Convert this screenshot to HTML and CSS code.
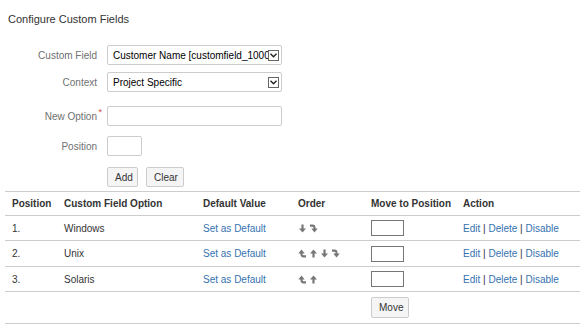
FILE: index.html
```html
<!DOCTYPE html>
<html lang="en">
<head>
    <meta charset="UTF-8">
    <title>Configure Custom Fields</title>
    <link rel="stylesheet" href="styles.css">
</head>
<body>
    <h2 class="page-title">Configure Custom Fields</h2>

    <form class="field-form">
        <div class="form-row">
            <label>Custom Field</label>
            <div class="select wide">
                <span class="select-text">Customer Name [customfield_10000]</span>
                <span class="select-arrow">
                    <svg width="7" height="5" viewBox="0 0 7 5"><path d="M0.5 0.8 L3.5 3.8 L6.5 0.8" fill="none" stroke="#222" stroke-width="1.4"/></svg>
                </span>
            </div>
        </div>
        <div class="form-row context-row">
            <label>Context</label>
            <div class="select wide">
                <span class="select-text">Project Specific</span>
                <span class="select-arrow">
                    <svg width="7" height="5" viewBox="0 0 7 5"><path d="M0.5 0.8 L3.5 3.8 L6.5 0.8" fill="none" stroke="#222" stroke-width="1.4"/></svg>
                </span>
            </div>
        </div>
        <div class="form-row option-row">
            <label class="required">New Option<span class="asterisk">*</span></label>
            <input type="text" class="text-input wide">
        </div>
        <div class="form-row position-row">
            <label>Position</label>
            <input type="text" class="text-input short">
        </div>
        <div class="form-row button-row">
            <label></label>
            <div class="buttons">
                <button type="button" class="btn btn-add">Add</button>
                <button type="button" class="btn btn-clear">Clear</button>
            </div>
        </div>
    </form>

    <table class="options-table">
        <thead>
            <tr>
                <th class="col-pos">Position</th>
                <th class="col-name">Custom Field Option</th>
                <th class="col-default">Default Value</th>
                <th class="col-order">Order</th>
                <th class="col-move">Move to Position</th>
                <th>Action</th>
            </tr>
        </thead>
        <tbody>
            <tr>
                <td>1.</td>
                <td>Windows</td>
                <td><a href="#">Set as Default</a></td>
                <td class="order-cell">
                    <svg class="arrow" width="9" height="9" viewBox="0 0 9 9"><use href="#arrow-down"/></svg>
                    <svg class="arrow" width="9" height="9" viewBox="0 0 9 9"><use href="#arrow-last"/></svg>
                </td>
                <td><input type="text" class="move-input"></td>
                <td><a href="#">Edit</a> <span class="sep">|</span> <a href="#">Delete</a> <span class="sep">|</span> <a href="#">Disable</a></td>
            </tr>
            <tr class="row-tall">
                <td>2.</td>
                <td>Unix</td>
                <td><a href="#">Set as Default</a></td>
                <td class="order-cell">
                    <svg class="arrow" width="9" height="9" viewBox="0 0 9 9"><use href="#arrow-first"/></svg>
                    <svg class="arrow" width="9" height="9" viewBox="0 0 9 9"><use href="#arrow-up"/></svg>
                    <svg class="arrow" width="9" height="9" viewBox="0 0 9 9"><use href="#arrow-down"/></svg>
                    <svg class="arrow" width="9" height="9" viewBox="0 0 9 9"><use href="#arrow-last"/></svg>
                </td>
                <td><input type="text" class="move-input"></td>
                <td><a href="#">Edit</a> <span class="sep">|</span> <a href="#">Delete</a> <span class="sep">|</span> <a href="#">Disable</a></td>
            </tr>
            <tr>
                <td>3.</td>
                <td>Solaris</td>
                <td><a href="#">Set as Default</a></td>
                <td class="order-cell">
                    <svg class="arrow" width="9" height="9" viewBox="0 0 9 9"><use href="#arrow-first"/></svg>
                    <svg class="arrow" width="9" height="9" viewBox="0 0 9 9"><use href="#arrow-up"/></svg>
                </td>
                <td><input type="text" class="move-input"></td>
                <td><a href="#">Edit</a> <span class="sep">|</span> <a href="#">Delete</a> <span class="sep">|</span> <a href="#">Disable</a></td>
            </tr>
            <tr class="move-row">
                <td></td>
                <td></td>
                <td></td>
                <td></td>
                <td><button type="button" class="btn btn-move">Move</button></td>
                <td></td>
            </tr>
        </tbody>
    </table>

    <!-- shared arrow shapes -->
    <svg class="defs" width="0" height="0">
        <defs>
            <g id="arrow-down" fill="#777">
                <rect x="3.4" y="0.5" width="2.2" height="4.5"/>
                <path d="M1 4.5 L8 4.5 L4.5 8.5 Z"/>
            </g>
            <g id="arrow-up" fill="#777">
                <rect x="3.4" y="4" width="2.2" height="4.5"/>
                <path d="M1 4.5 L8 4.5 L4.5 0.5 Z"/>
            </g>
            <g id="arrow-last">
                <path d="M1 1.6 H3.5 Q5.5 1.6 5.5 4 V5" fill="none" stroke="#777" stroke-width="2.1"/>
                <path d="M2.3 4.6 L8.7 4.6 L5.5 8.6 Z" fill="#777"/>
            </g>
            <g id="arrow-first">
                <path d="M8 7.4 H5.5 Q3.5 7.4 3.5 5 V4" fill="none" stroke="#777" stroke-width="2.1"/>
                <path d="M0.3 4.4 L6.7 4.4 L3.5 0.4 Z" fill="#777"/>
            </g>
        </defs>
    </svg>
</body>
</html>
```

FILE: styles.css
```css
body {
    margin: 0;
    font-family: "Liberation Sans", Arial, sans-serif;
    font-size: 10px;
    color: #333;
    background-color: #fff;
}
.page-title {
    margin: 0;
    padding: 12px 8px 0;
    font-size: 11px;
    line-height: 14px;
    font-weight: normal;
    color: #333;
}
.field-form {
    margin-top: 19px;
}
.form-row {
    display: flex;
    align-items: center;
    gap: 10px;
    height: 20px;
}
.form-row label {
    width: 97px;
    text-align: right;
    color: #707070;
    position: relative;
}
.context-row {
    margin-top: 7px;
}
.option-row {
    margin-top: 14px;
}
.position-row {
    margin-top: 10px;
}
.button-row {
    margin-top: 11px;
}
.asterisk {
    position: absolute;
    right: -5px;
    top: -4px;
    color: #d04437;
    font-size: 9px;
}
.select {
    box-sizing: border-box;
    height: 20px;
    border: 1px solid #ccc;
    border-radius: 2px;
    display: flex;
    align-items: center;
    padding-left: 5px;
    padding-right: 2px;
    color: #000;
    background-color: #fff;
    overflow: hidden;
}
.select-text {
    flex: 1;
    white-space: nowrap;
    overflow: hidden;
}
.select-arrow {
    box-sizing: border-box;
    width: 11px;
    height: 11px;
    border: 1px solid #666;
    display: flex;
    align-items: center;
    justify-content: center;
    background-color: #fff;
    flex-shrink: 0;
}
.wide {
    width: 175px;
}
.text-input {
    box-sizing: border-box;
    height: 20px;
    border: 1px solid #ccc;
    border-radius: 2px;
    padding: 0 4px;
    font-family: inherit;
    font-size: 10px;
    margin: 0;
}
.short {
    width: 35px;
}
.buttons {
    display: flex;
    gap: 8px;
}
.btn {
    box-sizing: border-box;
    height: 20px;
    padding: 0 7px;
    margin: 0;
    border: 1px solid #ccc;
    border-radius: 2px;
    background-color: #f5f5f5;
    color: #333;
    font-family: inherit;
    font-size: 10px;
    cursor: pointer;
}
.btn-add {
    width: 31px;
}
.btn-clear {
    width: 38px;
}
.btn-move {
    width: 38px;
    height: 21px;
    vertical-align: middle;
}
.options-table {
    margin: 4px 0 0 5px;
    width: 575px;
    border-collapse: collapse;
    table-layout: fixed;
}
.options-table th,
.options-table td {
    border-top: 1px solid #ccc;
    border-bottom: 1px solid #ccc;
    padding: 0 7px;
    text-align: left;
    vertical-align: middle;
    white-space: nowrap;
}
.options-table th {
    height: 23px;
    font-weight: bold;
    color: #333;
}
.options-table td {
    height: 24px;
}
.options-table .row-tall td {
    height: 25px;
}
.options-table .move-row td {
    height: 31px;
}
.col-pos { width: 38px; }
.col-name { width: 125px; }
.col-default { width: 81px; }
.col-order { width: 59px; }
.col-move { width: 78px; }
.options-table a {
    color: #3572b0;
    text-decoration: none;
}
.sep {
    color: #333;
}
.order-cell {
    font-size: 0;
}
.arrow {
    margin-right: 2px;
    vertical-align: middle;
}
.move-input {
    box-sizing: border-box;
    width: 33px;
    height: 16px;
    border: 1px solid #767676;
    margin: 0;
    padding: 0;
    vertical-align: middle;
}
.defs {
    position: absolute;
}
```
